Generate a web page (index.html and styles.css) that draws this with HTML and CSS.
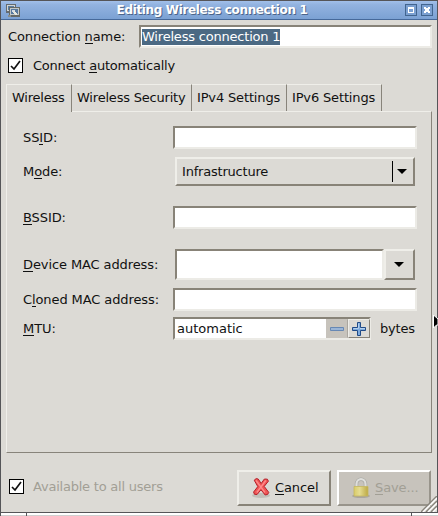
FILE: index.html
```html
<!DOCTYPE html>
<html lang="en">
<head>
<meta charset="utf-8">
<title>Editing Wireless connection 1</title>
<link rel="stylesheet" href="styles.css">
</head>
<body>
<div class="window">
  <header class="titlebar">
    <svg class="app-icon" width="16" height="16" shape-rendering="crispEdges"><path d="M1 1h10v9H1z" fill="#656b70"/><path d="M2 2h8v6H2z" fill="#d1d5d4"/><path d="M3 3h6v4H3z" fill="#587ca4"/><path d="M4 4h11v10H4z" fill="#656966"/><path d="M5 5h9v7H5z" fill="#c3c8c8"/><path d="M6 6h7v5H6z" fill="#56789e"/><path d="M7 7h3v2H7z" fill="#d5dce2"/><path d="M9 9l3 3" stroke="#e7e8dd" stroke-width="2"/><path d="M3 12h3v2H3z" fill="#8b8f8c"/></svg>
    <h1>Editing Wireless connection 1</h1>
    <div class="win-btn"><svg width="10" height="10" shape-rendering="crispEdges"><path d="M2 2h6v6H2z M3 4v3h4V4z" fill="#fff" fill-rule="evenodd"/></svg></div>
    <div class="win-btn"><svg width="10" height="10" shape-rendering="crispEdges"><path d="M2 2h2v1h2V2h2v2H7v2h1v2H6V7H4v1H2V6h1V4H2z" fill="#fff"/></svg></div>
  </header>
  <div class="name-row">
    <label>Connection <u>n</u>ame:</label>
    <div class="entry"><span class="selected">Wireless connection 1</span></div>
  </div>
  <div class="check-row">
    <span class="check"><svg width="13" height="13"><path d="M2 7l3 3 6-8" fill="none" stroke="#111" stroke-width="1.7"/></svg></span>
    <label>Connect <u>a</u>utomatically</label>
  </div>
  <nav class="tabs">
    <div class="tab active">Wireless</div>
    <div class="tab security">Wireless Security</div>
    <div class="tab">IPv4 Settings</div>
    <div class="tab">IPv6 Settings</div>
  </nav>
  <main class="panel">
    <div class="row ssid"><label>SS<u>I</u>D:</label><div class="entry"></div></div>
    <div class="row mode"><label>M<u>o</u>de:</label>
      <div class="select"><span>Infrastructure</span><i class="divider"></i><svg class="arrow" width="10" height="5"><path d="M0 0h10L5 5z"/></svg></div></div>
    <div class="row bssid"><label><u>B</u>SSID:</label><div class="entry"></div></div>
    <div class="row device"><label><u>D</u>evice MAC address:</label>
      <div class="combo"><div class="entry"></div><div class="drop"><svg class="arrow" width="10" height="5"><path d="M0 0h10L5 5z"/></svg></div></div></div>
    <div class="row cloned"><label>C<u>l</u>oned MAC address:</label><div class="entry"></div></div>
    <div class="row mtu"><label><u>M</u>TU:</label>
      <div class="entry spin"><span>automatic</span>
        <div class="step minus"><svg width="16" height="16"><path d="M1.500 6.500h13v3h-13z" fill="#9bb5d6" stroke="#6788b4"/></svg></div>
        <div class="step"><svg width="16" height="16"><path d="M6.500 1.500h3v5h5v3h-5v5h-3v-5h-5v-3h5z" fill="#7daadd" stroke="#204a87"/><path d="M7.500 2.500v5h-5M9 7.500h5" fill="none" stroke="#b3d0ee"/></svg></div>
      </div><span class="unit">bytes</span></div>
  </main>
  <footer class="actions">
    <span class="check"><svg width="13" height="13"><path d="M2 7l3 3 6-8" fill="none" stroke="#111" stroke-width="1.7"/></svg></span>
    <label class="disabled">Available to all users</label>
    <div class="button">
      <svg width="20" height="22"><ellipse cx="10" cy="18.500" rx="9" ry="2.500" fill="#b5b3ad" opacity=".7"/><path d="M3.200 3.200l2-1.600 2 .4 3 4.400 3.200-4.400 3 .2 1 2-4.200 5.200 4.600 6-1.200 2-2.400.6-4.200-5.200-4 4.800-2.600-.4-.8-2.200 4.200-5.400z" fill="#ef5555" stroke="#b4202a" stroke-width="1" stroke-linejoin="round"/><path d="M5 3.500l9 12M14.800 3.500l-9 12" stroke="#ff8a8a" stroke-width="1.300"/></svg>
      <span><u>C</u>ancel</span></div>
    <div class="button insensitive">
      <svg width="20" height="22"><defs><linearGradient id="body" x2="1"><stop stop-color="#d9cc69"/><stop offset=".4" stop-color="#e5dc91"/><stop offset="1" stop-color="#bda944"/></linearGradient></defs><ellipse cx="10" cy="19" rx="9" ry="2" fill="#aaa69f"/><path d="M5.500 10V7a4.500 4.800 0 0 1 9 0v3" fill="none" stroke="#a5a5a0" stroke-width="3.400"/><path d="M5.500 10V7a4.500 4.800 0 0 1 9 0v3" fill="none" stroke="#dededb" stroke-width="2.200"/><path d="M3 9.500h14v9.500H3z" fill="url(#body)" stroke="#c5b760" stroke-width=".8"/></svg>
      <span><u>S</u>ave...</span></div>
  </footer>
  <svg class="grip" width="16" height="16"><path d="M0 16L16 0M5 16L16 5M10 16l6-6" stroke="#88847b" stroke-width="1.500"/><path d="M2 16L16 2M7 16L16 7M12 16l4-4" stroke="#fff" stroke-width="1.300"/></svg>
</div>
<div class="below"><i></i><i></i><i></i></div>
<svg class="cursor" width="5" height="14"><path d="M.5 0v13l3-3H5V4z" fill="#000" stroke="#fff"/></svg>
</body>
</html>
```
FILE: styles.css
```css
* { box-sizing: border-box; }
body {
  margin: 0;
  width: 438px;
  height: 516px;
  overflow: hidden;
  position: relative;
  background: #dcdad5;
  color: #111;
  font: 13px/16px "DejaVu Sans", sans-serif;
  letter-spacing: -0.1px;
  white-space: nowrap;
}
u { text-decoration: none; box-shadow: 0 -1px 0 #111 inset; }
.window {
  position: relative;
  height: 513px;
  border: 1px solid #555558;
  display: flex;
  flex-direction: column;
}
.titlebar {
  height: 19px;
  flex: none;
  display: flex;
  align-items: center;
  padding: 0 4px;
  background: linear-gradient(#a2c0ea, #93b3e0 20%, #7ba1d3);
  border-bottom: 1px solid #46699a;
}
.app-icon { flex: none; margin-top: 1px; }
h1 {
  flex: 1;
  margin: -1px 0 0;
  padding-left: 2px;
  text-align: center;
  font-size: 12px;
  line-height: 16px;
  letter-spacing: -0.35px;
  color: #fff;
  text-shadow: 1px 1px #4c6488;
}
.win-btn {
  width: 12px;
  height: 12px;
  margin-left: 4px;
  border: 1px solid #42658f;
  background: #7ba0d1;
}
.win-btn svg { display: block; }
.entry {
  height: 23px;
  background: #fff;
  border: 2px solid;
  border-color: #888378 #ecebe6 #ecebe6 #888378;
}
.name-row { display: flex; height: 24px; margin: 5px 5px 0 7px; }
.name-row label { width: 131px; padding-top: 4px; }
.name-row .entry { flex: 1; padding: 2px 1px; }
.selected {
  display: block;
  width: fit-content;
  height: 16px;
  background: #4b6983;
  color: #fff;
  letter-spacing: -0.2px;
}
.check-row { display: flex; margin: 9px 0 0 7px; height: 16px; }
.check { flex: none; width: 15px; height: 15px; background: #fff; border: 1px solid #000; }
.check svg { display: block; }
.check-row label { margin-left: 10px; letter-spacing: -0.22px; }
.tabs { display: flex; margin: 10px 0 0 5px; height: 27px; position: relative; z-index: 1; }
.tab {
  width: 95px;
  padding: 5px 0 0 5px;
  border-top: 1px solid #efeee9;
  border-right: 1px solid #88847b;
  letter-spacing: -0.15px;
}
.tab.active { width: 66px; height: 28px; background: #dcdad5; border-left: 1px solid #efeee9; letter-spacing: -0.22px; }
.tab.security { width: 120px; letter-spacing: -0.2px; }
.panel {
  height: 342px;
  margin: 0 5px;
  padding: 14px 14px 0 16px;
  border: 1px solid;
  border-color: #efeee9 #88847b #88847b #efeee9;
}
.row { display: flex; align-items: center; height: 23px; }
.row label { width: 150px; flex: none; }
.row > .entry { flex: 1; }
.mode { height: 29px; margin-top: 8px; }
.bssid { margin-top: 20px; }
.device { height: 31px; margin-top: 20px; }
.cloned { margin-top: 8px; }
.mtu { margin-top: 6px; }
.select, .drop {
  background: #dcdad5;
  border: 2px solid;
  border-color: #efeee9 #888378 #888378 #efeee9;
  display: flex;
  align-items: center;
}
.select { width: 240px; height: 29px; margin-left: 2px; padding-left: 5px; letter-spacing: -0.2px; }
.select span { flex: 1; }
.divider { width: 1px; height: 21px; background: #000; margin-right: 4px; }
.select .arrow { margin-right: 6px; }
.combo { display: flex; margin-left: 2px; width: 240px; height: 31px; }
.combo .entry { width: 209px; height: 31px; }
.drop { width: 31px; padding-left: 8px; }
.row > .spin { flex: none; width: 198px; display: flex; padding-left: 2px; margin-right: 0; }
.spin span { flex: 1; padding-top: 2px; letter-spacing: 0; }
.spin .step:last-child { margin-right: -1px; }
.step {
  width: 22px;
  height: 19px;
  padding: 1px 2px;
  border: 1px solid;
  border-color: #efeee9 #888378 #888378 #efeee9;
  background: #dcdad5;
}
.step svg { display: block; }
.minus { background: #c7c3bc; border-color: #c7c3bc #aaa69f #c7c3bc #c7c3bc; }
.unit { margin-left: 9px; letter-spacing: -0.2px; }
.actions { display: flex; align-items: center; height: 36px; margin: 17px 6px 0 8px; }
.actions .check { margin-bottom: 3px; }
.disabled { color: #a29f95; margin: 0 0 2px 9px; flex: 1; letter-spacing: -0.22px; }
.button {
  width: 94px;
  height: 36px;
  display: flex;
  align-items: center;
  padding-left: 12px;
  gap: 4px;
  border: 2px solid;
  border-color: #efeee9 #888378 #888378 #efeee9;
}
.insensitive {
  margin-left: 6px;
  background: #c7c3bc;
  color: #a29f95;
  border-color: #fff #98948b #98948b #fff;
}
.insensitive u { box-shadow: 0 -1px 0 #a29f95 inset; }
.grip { position: absolute; right: 0; bottom: 0; }
.below { display: flex; height: 3px; background: #555558; gap: 1px; }
.below i { background: linear-gradient(#fff 66%, #d0d0d0 66%); width: 25px; margin-left: 1px; }
.below i:nth-child(2) { width: 384px; margin: 0; }
.below i:nth-child(3) { flex: 1; margin: 0; }
.cursor { position: absolute; left: 433px; top: 315px; }
```
